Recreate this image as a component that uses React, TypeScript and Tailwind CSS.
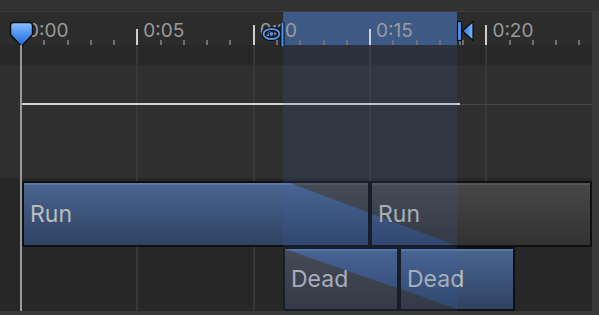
import React from 'react';

const PX_PER_UNIT = 23.27;
const ORIGIN_X = 21;

const majorTicks = [0, 5, 10, 15, 20];
const minorTicks = Array.from({ length: 25 }, (_, i) => i).filter((t) => t % 5 !== 0);
const gridLines = [5, 10, 15, 20];

const tickX = (t: number) => ORIGIN_X + t * PX_PER_UNIT;
const label = (t: number) => `0:${t.toString().padStart(2, '0')}`;

const BLUE = 'bg-[linear-gradient(#5a79ab_0,#5a79ab_2px,#4a648e_2px,#2e4263_100%)]';
const GREY = 'bg-[linear-gradient(#555555_0,#555555_2px,#474747_2px,#323232_100%)]';

interface ClipProps {
  name: string;
  base: 'blue' | 'grey';
  clip?: string;
  className: string;
}

const Clip: React.FC<ClipProps> = ({ name, base, clip, className }) => (
  <div className={`relative overflow-hidden border-2 border-[#101010] ${className} ${base === 'blue' ? BLUE : GREY}`}>
    {clip && <div className={`absolute inset-0 ${base === 'blue' ? GREY : BLUE} ${clip}`} />}
    <span className="relative flex h-full items-center pl-[6px] text-[23px] leading-none text-[#bdbdbd]">{name}</span>
  </div>
);

const PlayMarker = () => (
  <svg className="absolute left-[9px] top-[9px]" width="25" height="27" viewBox="0 0 25 27">
    <defs>
      <linearGradient id="pm" x1="0" y1="0" x2="0" y2="1">
        <stop offset="0" stopColor="#8cc0ff" />
        <stop offset="0.45" stopColor="#4f95f2" />
        <stop offset="1" stopColor="#2465d2" />
      </linearGradient>
    </defs>
    <path d="M4.5 1.5 H20.5 Q23.5 1.5 23.5 4.5 V13.5 L12.5 25.5 L1.5 13.5 V4.5 Q1.5 1.5 4.5 1.5 Z" fill="url(#pm)" stroke="#0c0c0c" strokeWidth="1.5" />
  </svg>
);

const StartMarker = () => (
  <svg className="absolute left-[260px] top-[9px]" width="26" height="28" viewBox="0 0 26 28">
    <ellipse cx="11.5" cy="13" rx="8" ry="5" fill="none" stroke="#0c0c0c" strokeWidth="4" />
    <ellipse cx="11.5" cy="13" rx="8" ry="5" fill="none" stroke="#4d94f0" strokeWidth="2" />
    <circle cx="11.5" cy="13" r="2.4" fill="#4d94f0" stroke="#0c0c0c" strokeWidth="1" />
    <rect x="20.5" y="1" width="4" height="25" fill="#0c0c0c" />
    <rect x="21.5" y="1.5" width="2" height="24" fill="#4d94f0" />
  </svg>
);

const EndMarker = () => (
  <svg className="absolute left-[456px] top-[8px]" width="19" height="23" viewBox="0 0 19 23">
    <defs>
      <linearGradient id="em" x1="0" y1="0" x2="1" y2="0">
        <stop offset="0" stopColor="#2f74de" />
        <stop offset="1" stopColor="#7ab6ff" />
      </linearGradient>
    </defs>
    <rect x="1.5" y="1.5" width="4" height="19" fill="#4d94f0" stroke="#0c0c0c" strokeWidth="1.2" />
    <path d="M6.5 11 L17 1.5 V20.5 Z" fill="url(#em)" stroke="#0c0c0c" strokeWidth="1.2" />
  </svg>
);

const Ruler = () => (
  <div className="relative h-[33px] shrink-0 bg-[#2c2c2c]">
    <div className="absolute left-[283px] top-0 h-full w-[174px] bg-[#3d5a86]" />
    {minorTicks.map((t) => (
      <div
        key={`m${t}`}
        className="absolute bottom-0 h-[5px] w-[2px] bg-[#6f6f6f]"
        style={{ left: tickX(t) - 1 }}
      />
    ))}
    {majorTicks.map((t) => (
      <React.Fragment key={t}>
        <div
          className={`absolute bottom-0 w-[2px] bg-[#cfcfcf] ${t % 10 === 0 ? 'h-[20px]' : 'h-[16px]'}`}
          style={{ left: tickX(t) - 1 }}
        />
        <span
          className="absolute top-[9px] text-[19px] leading-[19px] text-[#9a9a9a]"
          style={{ left: tickX(t) + 6 }}
        >
          {label(t)}
        </span>
      </React.Fragment>
    ))}
    <div className="absolute bottom-0 left-[459px] h-[4px] w-[2px] bg-[#6f6f6f]" />
    <PlayMarker />
    <StartMarker />
    <EndMarker />
  </div>
);

const App: React.FC = () => {
  return (
    <div className="flex h-[315px] w-[599px] flex-col overflow-hidden bg-[#383838] font-['Inter','Noto_Sans',sans-serif]">
      <div className="h-[12px] shrink-0 border-b border-[#3d3d3d] bg-[#323232]" />
      <div className="flex min-h-0 flex-1">
        <div className="relative flex w-[592px] flex-col">
          <Ruler />

          {/* curve area */}
          <div className="h-[133px] shrink-0 bg-[#2f2f2f]">
            <div className="h-[20px] bg-[#282828]" />
          </div>

          {/* grid + playhead behind the clips */}
          {gridLines.map((t) => (
            <div
              key={t}
              className="absolute bottom-0 top-[33px] w-[2px] bg-[#383838]"
              style={{ left: tickX(t) - 1 }}
            />
          ))}
          <div className="absolute bottom-0 left-[20px] top-[33px] w-[2px] bg-[#9a9a9a]" />
          <div className="absolute left-[22px] top-[91px] h-[2px] w-[438px] bg-[#d2d2d2]" />
          <div className="absolute left-[460px] top-[92px] h-[1px] w-[132px] bg-[#474747]" />

          <div className="flex h-[133px] shrink-0 flex-col bg-[#272727] pt-[3px]">
            <div className="flex h-[66px] pl-[22px]">
              <Clip
                name="Run"
                base="grey"
                className="w-[348px]"
                clip="[clip-path:polygon(0_0,266px_0,431px_100%,0_100%)]"
              />
              <Clip
                name="Run"
                base="grey"
                className="w-[222px]"
                clip="[clip-path:polygon(0_31px,83px_100%,0_100%)]"
              />
            </div>
            <div className="flex h-[64px] pl-[283px]">
              <Clip
                name="Dead"
                base="grey"
                className="w-[116px]"
                clip="[clip-path:polygon(0_0,100%_0,100%_39px)]"
              />
              <Clip
                name="Dead"
                base="grey"
                className="w-[116px]"
                clip="[clip-path:polygon(0_0,100%_0,100%_100%,56px_100%,0_40px)]"
              />
            </div>
          </div>

          {/* transition selection */}
          <div className="absolute bottom-0 left-[283px] top-[33px] w-[174px] bg-[rgba(60,100,170,0.17)]" />
        </div>
        <div className="flex-1" />
      </div>
      <div className="h-[4px] shrink-0" />
    </div>
  );
};

export default App;
